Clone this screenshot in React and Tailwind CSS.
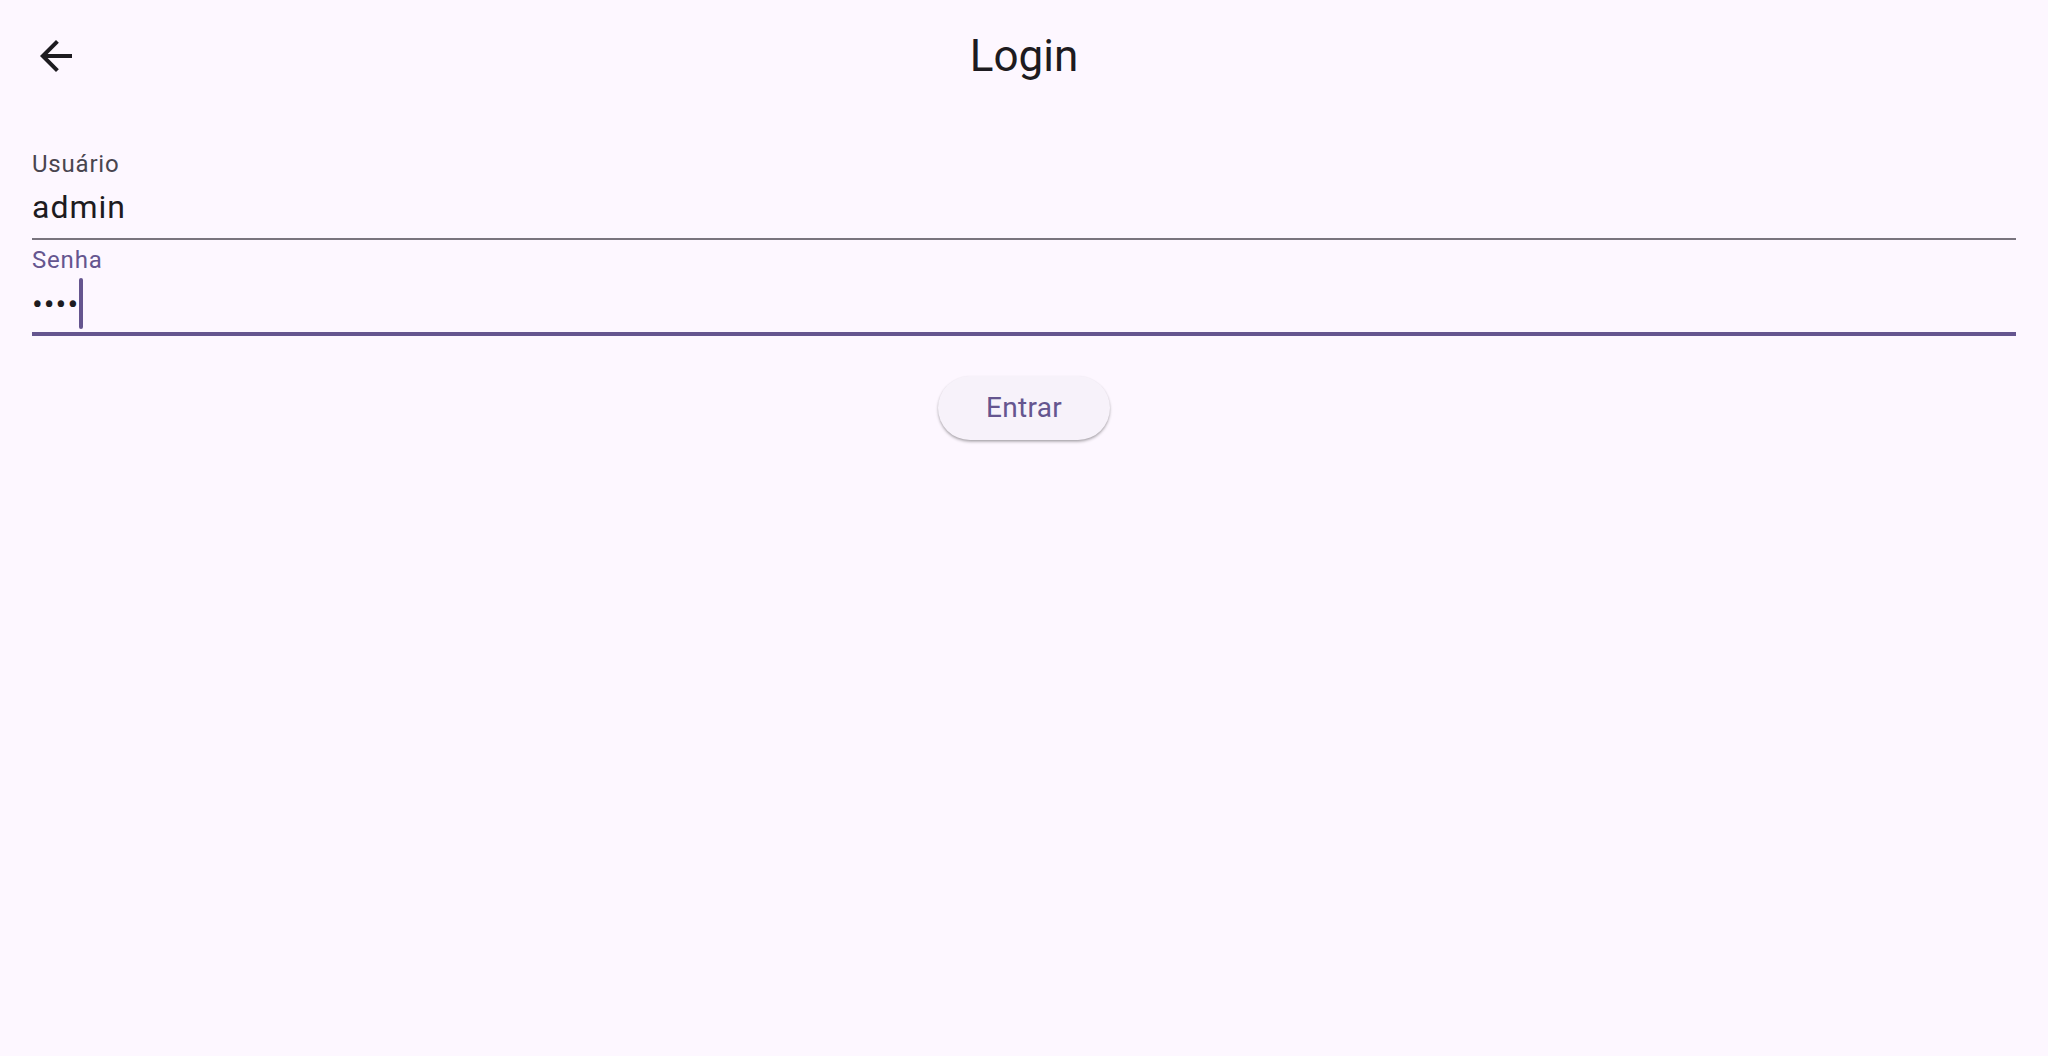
export default function App() {
  return (
    <div className="min-h-screen w-full bg-[#fdf7ff] text-[#1d1b20]" style={{ fontFamily: 'Roboto, "Noto Sans", sans-serif' }}>
      {/* App bar */}
      <header className="relative flex h-[112px] items-center">
        <button className="ml-[32px] flex h-[48px] w-[48px] items-center justify-center">
          <svg viewBox="0 0 24 24" className="h-[48px] w-[48px] fill-[#1d1b20]">
            <path d="M20 11H7.83l5.59-5.59L12 4l-8 8 8 8 1.41-1.41L7.83 13H20v-2z" />
          </svg>
        </button>
        <h1 className="absolute left-1/2 -translate-x-1/2 text-[44px] leading-[52px] font-normal">Login</h1>
      </header>

      <main className="flex flex-col px-[32px] pt-[32px]">
        {/* Usuário */}
        <div className="flex h-[96px] flex-col border-b-2 border-[#79747e] pt-[4px]">
          <label className="h-[32px] text-[24px] leading-[32px] tracking-[0.8px] text-[#49454f]">Usuário</label>
          <div className="mt-[7px] h-[40px] text-[32px] leading-[40px] tracking-[1px]">admin</div>
        </div>

        {/* Senha (focused) */}
        <div className="flex h-[96px] flex-col border-b-4 border-[#65558f] pt-[4px]">
          <label className="h-[32px] text-[24px] leading-[32px] tracking-[0.8px] text-[#65558f]">Senha</label>
          <div className="mt-[2px] flex h-[51px] items-center">
            <span className="text-[32px] leading-[40px] tracking-[1px]">••••</span>
            <span className="h-[51px] w-[4px] rounded-[2px] bg-[#65558f]" />
          </div>
        </div>

        <div className="mt-[40px] flex justify-center">
          <button className="h-[64px] rounded-full bg-[#f7f2fa] px-[48px] text-[28px] leading-[64px] font-normal tracking-[0.3px] text-[#65558f] shadow-[0_2px_3px_rgba(0,0,0,0.25),0_1px_2px_rgba(0,0,0,0.1)]">
            Entrar
          </button>
        </div>
      </main>
    </div>
  );
}
